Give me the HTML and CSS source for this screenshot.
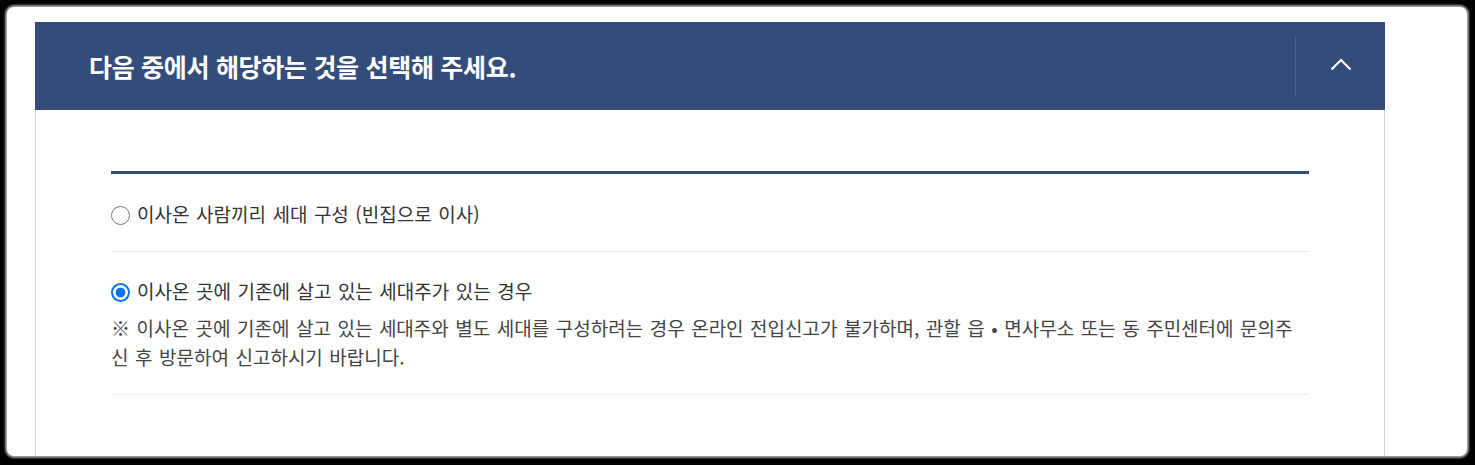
FILE: index.html
```html
<!DOCTYPE html>
<html lang="ko">
<head>
<meta charset="utf-8">
<title>전입신고</title>
<link rel="stylesheet" href="styles.css">
</head>
<body>
<div class="frame">
  <section class="card">
    <header class="card-head">
      <h2 class="card-title">다음 중에서 해당하는 것을 선택해 주세요.</h2>
      <button class="toggle" type="button" aria-label="접기">
        <svg width="22" height="13" viewBox="0 0 22 13"><polyline points="1.5,11.5 11,2 20.5,11.5" fill="none" stroke="#fff" stroke-width="2.2"/></svg>
      </button>
    </header>
    <div class="card-body">
      <ul class="options">
        <li class="option">
          <label class="opt-label"><input type="radio" name="hh" class="radio"><span>이사온 사람끼리 세대 구성 (빈집으로 이사)</span></label>
        </li>
        <li class="option">
          <label class="opt-label"><input type="radio" name="hh" class="radio" checked><span>이사온 곳에 기존에 살고 있는 세대주가 있는 경우</span></label>
          <p class="note">※ 이사온 곳에 기존에 살고 있는 세대주와 별도 세대를 구성하려는 경우 온라인 전입신고가 불가하며, 관할 읍 • 면사무소 또는 동 주민센터에 문의주신 후 방문하여 신고하시기 바랍니다.</p>
        </li>
      </ul>
    </div>
  </section>
</div>
</body>
</html>
```
FILE: styles.css
```css
html, body {
  margin: 0;
  padding: 0;
  background: #000;
}
body {
  padding: 7px;
  width: 1475px;
  height: 465px;
  box-sizing: border-box;
  overflow: hidden;
  font-family: "Noto Sans CJK KR", "Noto Sans", sans-serif;
}
.frame {
  width: 1460px;
  height: 449px;
  background: #fff;
  border-radius: 7px;
  box-shadow: 0 0 2px 2px rgba(200, 200, 200, 0.8);
  overflow: hidden;
  padding: 15px 0 0 28px;
  box-sizing: border-box;
}
.card {
  width: 1350px;
  height: 600px;
  border-left: 1px solid #d2d2d2;
  border-right: 1px solid #d2d2d2;
  box-sizing: border-box;
  background: #fff;
}
.card-head {
  height: 88px;
  margin: 0 -1px;
  background: #344c79;
  display: flex;
  align-items: center;
}
.card-title {
  flex: 1;
  margin: 0;
  padding-left: 54px;
  color: #fff;
  font-size: 25px;
  font-weight: 700;
  letter-spacing: -0.3px;
  line-height: 30px;
}
.toggle {
  width: 90px;
  height: 60px;
  border: 0;
  border-left: 1px solid #4b6290;
  background: transparent;
  padding: 0;
  display: flex;
  align-items: center;
  justify-content: center;
  cursor: pointer;
}
.toggle svg {
  display: block;
  margin-top: -4px;
}
.card-body {
  padding: 61px 75px 0 75px;
}
.options {
  list-style: none;
  margin: 0;
  padding: 0;
  border-top: 3px solid #344c79;
}
.option {
  padding: 26px 0 23px;
  border-bottom: 1px solid #ebebeb;
}
.option + .option {
  padding-top: 25px;
}
.opt-label {
  display: flex;
  align-items: center;
  font-size: 19px;
  word-spacing: 1.2px;
  line-height: 28px;
  color: #333;
  cursor: pointer;
}
.radio {
  appearance: none;
  -webkit-appearance: none;
  width: 19px;
  height: 19px;
  margin: 2px 7px 0 0;
  border: 1.6px solid #777;
  border-radius: 50%;
  background: #fff;
  box-sizing: border-box;
  flex: none;
}
.radio:checked {
  border: 2px solid #0a73f2;
  background: radial-gradient(circle, #0a73f2 0 4.6px, #fff 5.2px);
}
.note {
  margin: 8px 0 0;
  font-size: 19px;
  word-spacing: 1.2px;
  line-height: 29px;
  color: #444;
}
```
